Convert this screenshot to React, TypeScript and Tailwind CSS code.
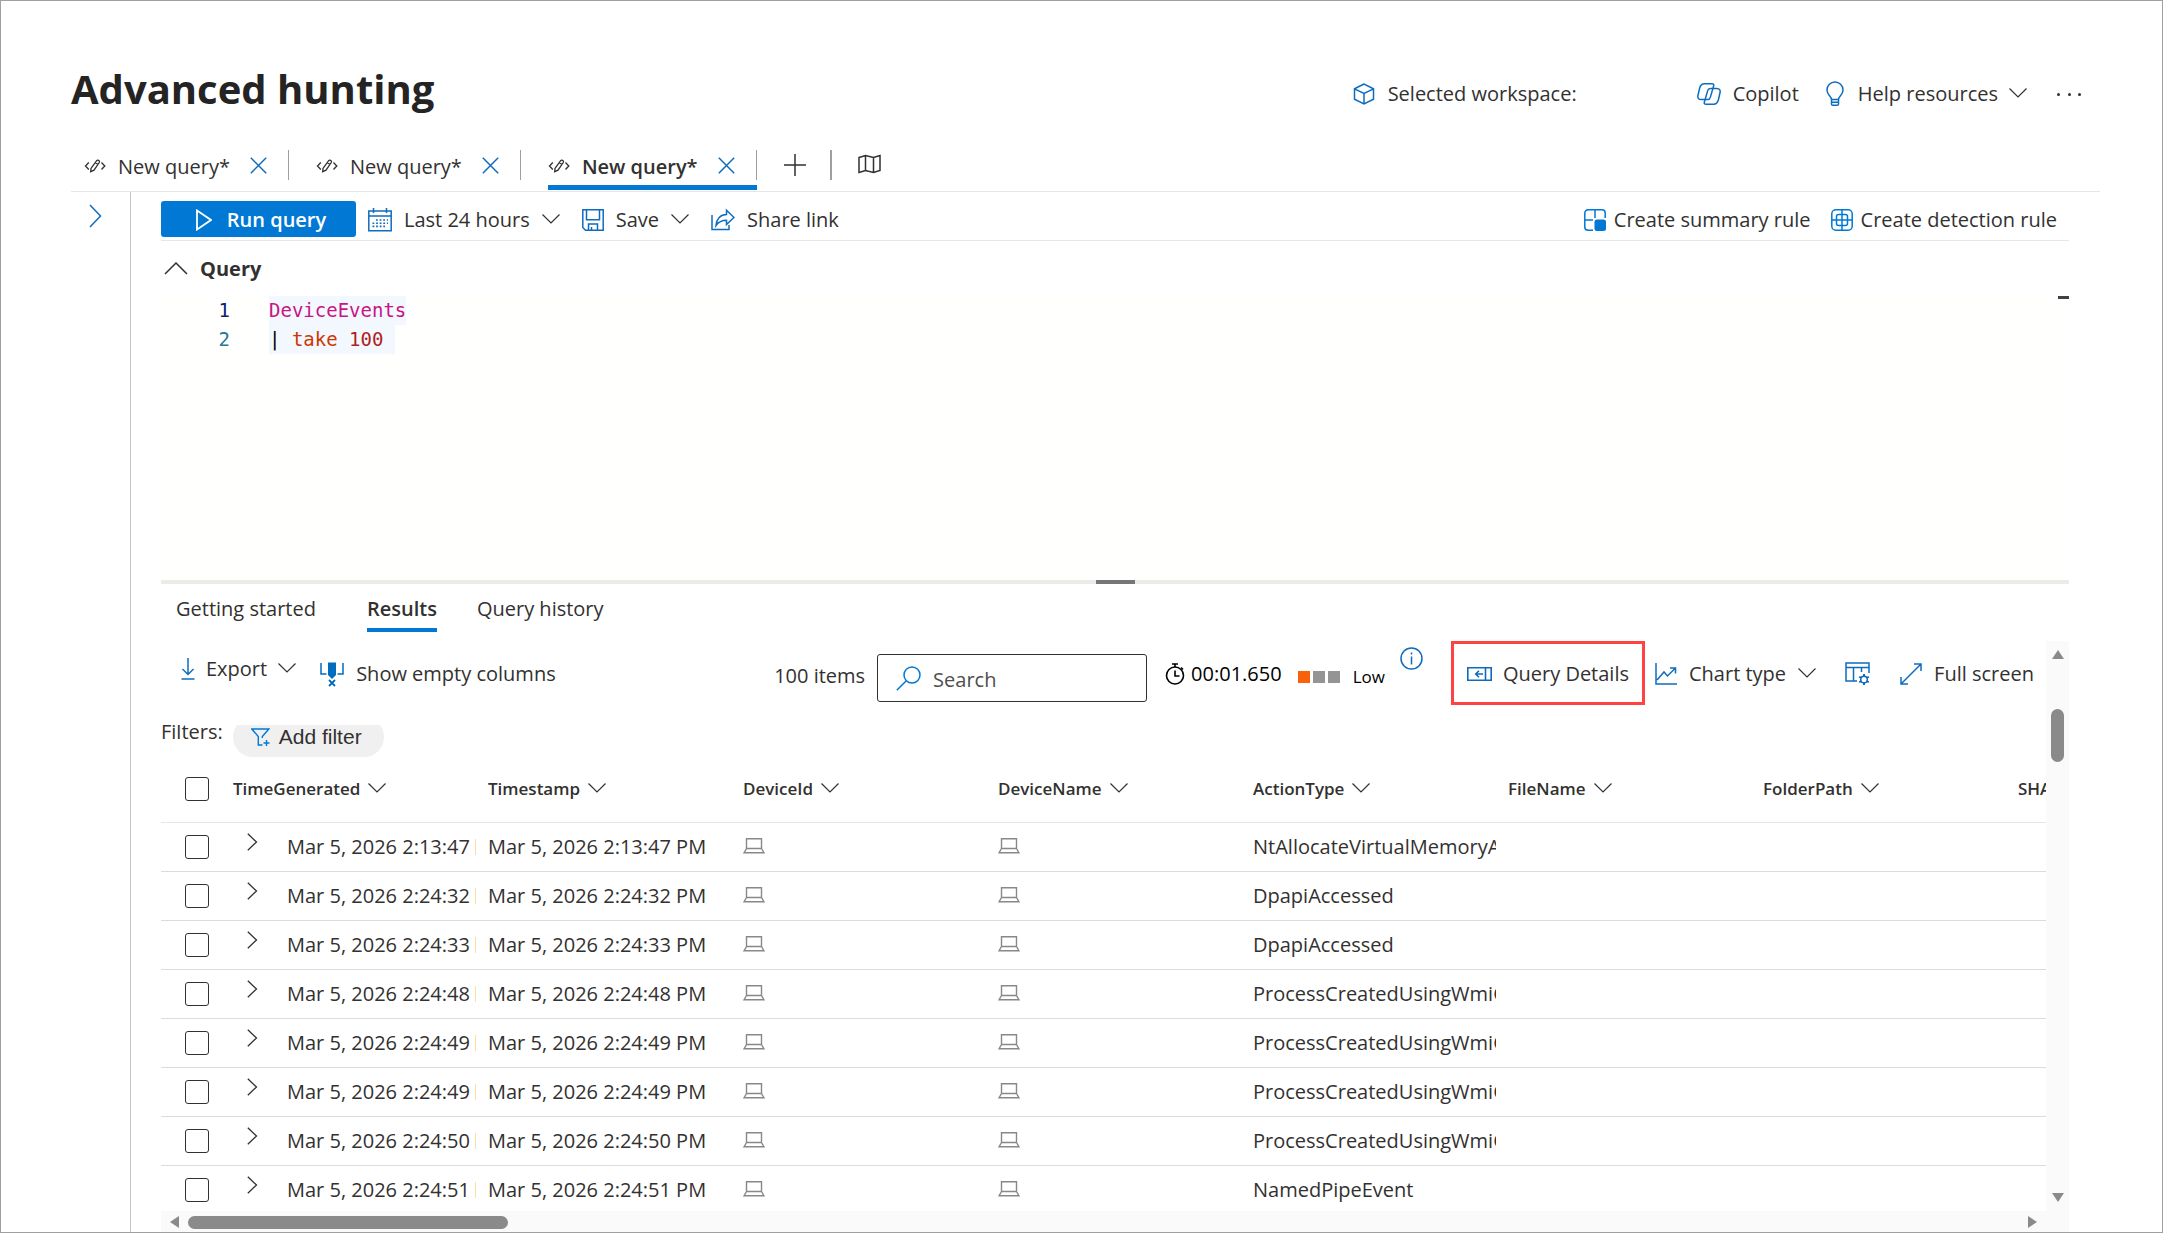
import React, { useState } from 'react';

interface EventRow {
  id: number;
  time: string;
  action: string;
}

const ROWS: EventRow[] = [
  { id: 1, time: 'Mar 5, 2026 2:13:47 PM', action: 'NtAllocateVirtualMemoryApiCall' },
  { id: 2, time: 'Mar 5, 2026 2:24:32 PM', action: 'DpapiAccessed' },
  { id: 3, time: 'Mar 5, 2026 2:24:33 PM', action: 'DpapiAccessed' },
  { id: 4, time: 'Mar 5, 2026 2:24:48 PM', action: 'ProcessCreatedUsingWmiQuery' },
  { id: 5, time: 'Mar 5, 2026 2:24:49 PM', action: 'ProcessCreatedUsingWmiQuery' },
  { id: 6, time: 'Mar 5, 2026 2:24:49 PM', action: 'ProcessCreatedUsingWmiQuery' },
  { id: 7, time: 'Mar 5, 2026 2:24:50 PM', action: 'ProcessCreatedUsingWmiQuery' },
  { id: 8, time: 'Mar 5, 2026 2:24:51 PM', action: 'NamedPipeEvent' },
];

const COLUMNS = [
  'TimeGenerated',
  'Timestamp',
  'DeviceId',
  'DeviceName',
  'ActionType',
  'FileName',
  'FolderPath',
  'SHA1',
];

const QUERY_TABS = [1, 2, 3];

interface IconProps {
  w: number;
  h: number;
  className?: string;
  sw?: number;
  children: React.ReactNode;
}

function Icon({ w, h, className = 'text-[#0f6cbd]', sw = 1.5, children }: IconProps) {
  return (
    <svg
      width={w}
      height={h}
      viewBox={`0 0 ${w} ${h}`}
      fill="none"
      stroke="currentColor"
      strokeWidth={sw}
      className={`shrink-0 ${className}`}
      aria-hidden="true"
    >
      {children}
    </svg>
  );
}

const ChevronDown = () => (
  <Icon w={18} h={18} sw={1.2} className="text-[#323130]">
    <path d="M.5 3.500 9 12 17.500 3.500" />
  </Icon>
);

const CodeIcon = () => (
  <Icon w={22} h={18} sw={1.3} className="text-[#323130]">
    <path d="M4.800 4.500 1.500 8l3.300 3.500M17.500 4.500 20.800 8l-3.300 3.500" />
    <path d="M12.500 2.800c1.200-1.500 3.600-.3 2.900 1.500L10 12.200l-3.300 1.500.3-3.300zM11.300 4.700l2.700 1.600" />
  </Icon>
);

const CloseIcon = () => (
  <Icon w={17} h={17} sw={1.5}>
    <path d="m.8.8 15.400 15.400M16.200.8.8 16.200" />
  </Icon>
);

const CubeIcon = () => (
  <Icon w={22} h={24}>
    <path d="M11 2 1.500 6.800v10.400L11 22l9.500-4.800V6.800zM1.500 6.800 11 11.500l9.500-4.700M11 11.500V22" />
  </Icon>
);

const CopilotIcon = () => (
  <Icon w={24} h={22}>
    <path d="M7.500.8h7.700c1.200 0 1.800.9 1.500 2l-3.400 11.600c-.4 1.400-1.200 2.200-2.600 2.200H4c-2.500 0-3.600-1.800-3-4.300l1.600-7C3.400 2.200 5 .8 7.500.8z" />
    <path d="M16.500 21.200H8.800c-1.200 0-1.800-.9-1.500-2l3.400-11.600c.4-1.400 1.200-2.200 2.600-2.200H20c2.500 0 3.600 1.800 3 4.300l-1.600 7c-.8 3.100-2.400 4.500-4.900 4.500z" />
  </Icon>
);

const BulbIcon = () => (
  <Icon w={24} h={26}>
    <path d="M8.500 18.500c0-3.500-4.500-4.500-4.500-9.500a8 8 0 0 1 16 0c0 5-4.500 6-4.500 9.500zM8.500 18.500V23c0 .8.500 1.300 1.300 1.300h4.400c.8 0 1.300-.5 1.300-1.300v-4.500M8.500 21.300h7" />
  </Icon>
);

const MapIcon = () => (
  <Icon w={23} h={20} className="text-[#323130]">
    <path d="M1 3.500 7.500 1.500l8 2 6.500-2v15l-6.500 2-8-2-6.500 2zM7.500 1.500v15M15.500 3.500v15" />
  </Icon>
);

const CalendarIcon = () => (
  <Icon w={24} h={24}>
    <path d="M.8 3h22.400v19.700H.8zM.8 8h22.400M5.500 0v5M18.500 0v5" />
    <path d="M8 12h12M4.500 15.200H20M4.500 18.400H17" strokeWidth={1.600} strokeDasharray="1.8 1.8" />
  </Icon>
);

const SaveIcon = () => (
  <Icon w={22} h={22}>
    <path d="M.8.8h20.400v20.400H3.500L.8 18.500zM4.500.8v10h13v-10M6.500 21V15h9v6M9.500 18v3" />
  </Icon>
);

const ShareIcon = () => (
  <Icon w={24} h={24}>
    <path d="M1 7v14.500h17V17" />
    <path d="M5 17.500C5.500 11 9.500 6.500 15.500 6.500V2.200L23 9.500l-7.500 7v-4.200C10.500 12.300 7.500 14 5 17.500z" />
  </Icon>
);

const SummaryRuleIcon = () => (
  <Icon w={22} h={22} className="text-[#0078d4]">
    <path d="M9 21.200H4A3.200 3.200 0 0 1 .8 18V4A3.200 3.200 0 0 1 4 .8h14A3.200 3.200 0 0 1 21.200 4v5M.8 11H9M11 .8V9" />
    <rect x="10.500" y="10.500" width="11.500" height="11.500" rx="2.500" fill="currentColor" stroke="none" />
  </Icon>
);

const DetectionRuleIcon = () => (
  <Icon w={22} h={22} className="text-[#0078d4]">
    <rect x=".8" y=".8" width="20.400" height="20.400" rx="4" />
    <rect x="5.500" y="5.500" width="11" height="11" rx="2" />
    <path d="M11 1v20M1 11h20" />
  </Icon>
);

const ExportIcon = () => (
  <Icon w={14} h={22}>
    <path d="M7 0v16.500M1.500 11 7 16.500 12.500 11M.5 21h13" />
  </Icon>
);

const ColumnsIcon = () => (
  <Icon w={24} h={25} className="text-[#006cbe]">
    <path d="M1 1v11h5.500M23 1v11h-5.500" />
    <path d="M8 .5h8V13l-4 4-4-4z" fill="currentColor" stroke="none" />
    <path d="m9 18 6 6M15 18l-6 6" strokeWidth={1.800} />
  </Icon>
);

const SearchIcon = () => (
  <Icon w={25} h={25} className="text-[#0078d4]">
    <circle cx="16" cy="9" r="8" />
    <path d="M10.300 14.700.8 24.200" />
  </Icon>
);

const StopwatchIcon = () => (
  <Icon w={20} h={22} className="text-black" sw={1.600}>
    <circle cx="10" cy="12.500" r="8.500" />
    <path d="M7 1h6M10 1v3M16 4.500l2 2M10 7.500v5.500h4.500" />
  </Icon>
);

const InfoIcon = () => (
  <Icon w={23} h={23}>
    <circle cx="11.500" cy="11.500" r="10.500" />
    <path d="M11.500 9.500v8M11.500 5.500v2" />
  </Icon>
);

const PaneIcon = () => (
  <Icon w={25} h={14} sw={1.600}>
    <path d="M.8.800h23.400v12.400H.8zM18.500 1v12M16 7H8.500M12 3.700 8.700 7l3.300 3.300" />
  </Icon>
);

const ChartIcon = () => (
  <Icon w={22} h={22}>
    <path d="M1 0v21h21M2 17l7-8 3.500 4 8-8M15 5h5.500v5.500" />
  </Icon>
);

const TableSettingsIcon = () => (
  <Icon w={25} h={24}>
    <path d="M12 19H1V1h23v10M1 5.500h23M8.500 5.500V19M16.500 5.500V10" />
    <circle cx="19" cy="17.500" r="3.300" />
    <path d="M19 12v2.500M19 20.500V23M14.200 14.700l2.200 1.300M21.600 19l2.200 1.300M14.200 20.300l2.200-1.300M21.600 16l2.200-1.300" strokeWidth={1.900} />
  </Icon>
);

const ExpandIcon = () => (
  <Icon w={22} h={22}>
    <path d="M1 21 21 1M14 1h7v7M1 14v7h7" />
  </Icon>
);

const FunnelIcon = () => (
  <Icon w={19} h={18} className="text-[#0078d4]" sw={1.400}>
    <path d="M11.300 10V8.500L17.800 1H.8l6.500 7.500V17h4.200" />
    <path d="M15.500 12v6M12.500 15h6" />
  </Icon>
);

const LaptopIcon = () => (
  <Icon w={22} h={16} className="text-[#8a8886]" sw={1.400}>
    <path d="M3.500.8h15v9.700h-15zM3.500 10.500 1 14.800h20l-2.500-4.300" />
  </Icon>
);

function Checkbox({ label }: { label: string }) {
  return (
    <input
      type="checkbox"
      aria-label={label}
      className="block size-6 appearance-none rounded-[3px] border border-[#323130] bg-white checked:bg-[#0078d4]"
    />
  );
}

function PageHeader() {
  return (
    <header className="flex items-center justify-between pt-14 pr-[19px]">
      <h1 className="text-[40px] leading-[64px] font-bold text-[#242424]">Advanced hunting</h1>
      <div className="flex items-center pt-[10px]">
        <div className="mr-[120px] flex items-center gap-[13px]">
          <CubeIcon />
          <span>Selected workspace:</span>
        </div>
        <button type="button" className="mr-6 flex items-center gap-3">
          <CopilotIcon />
          Copilot
        </button>
        <button type="button" className="mr-[30px] flex items-center gap-[11px]">
          <BulbIcon />
          Help resources
          <ChevronDown />
        </button>
        <button type="button" aria-label="More" className="flex w-6 justify-between">
          <span className="size-[3px] rounded-full bg-[#323130]" />
          <span className="size-[3px] rounded-full bg-[#323130]" />
          <span className="size-[3px] rounded-full bg-[#323130]" />
        </button>
      </div>
    </header>
  );
}

function QueryTabs() {
  const [active, setActive] = useState(3);

  return (
    <nav className="mt-5 flex h-[51px] shrink-0 items-start border-b border-[#e6e6e6] pl-[13px]">
      {QUERY_TABS.map((id) => (
        <div
          key={id}
          className={`mr-[27px] flex h-[49px] items-start ${
            id === active ? 'border-b-[5px] border-[#0078d4]' : ''
          }`}
        >
          <div className="mt-[9px] flex h-[30px] items-center border-r border-[#a19f9d] pr-[21px]">
            <button
              type="button"
              onClick={() => setActive(id)}
              className={`flex items-center gap-3 pt-[3px] ${id === active ? 'font-semibold' : ''}`}
            >
              <CodeIcon />
              New query*
            </button>
            <button type="button" aria-label="Close tab" className="ml-5 pt-px">
              <CloseIcon />
            </button>
          </div>
        </div>
      ))}
      <div className="mt-[9px] flex h-[30px] items-center border-r-2 border-[#a19f9d] pr-6">
        <button type="button" aria-label="New tab">
          <Icon w={22} h={22} className="text-[#323130]">
            <path d="M11 0v22M0 11h22" />
          </Icon>
        </button>
      </div>
      <button type="button" aria-label="Schema reference" className="mt-[13px] ml-[26px]">
        <MapIcon />
      </button>
    </nav>
  );
}

function Toolbar() {
  return (
    <div className="flex h-[49px] items-center justify-between border-b border-[#e6e6e6] pt-[6px]">
      <div className="flex items-center">
        <button
          type="button"
          className="flex h-9 w-[195px] items-center justify-center gap-[15px] rounded-[3px] bg-[#0078d4] pt-[2px] pl-[5px] font-semibold text-white"
        >
          <Icon w={16} h={22} sw={1.800} className="text-white">
            <path d="M1 1.500 15 11 1 20.500z" />
          </Icon>
          Run query
        </button>
        <button type="button" className="ml-3 flex items-center gap-3 pt-[2px]">
          <CalendarIcon />
          Last 24 hours
          <ChevronDown />
        </button>
        <button type="button" className="ml-[22px] flex items-center gap-3 pt-[2px]">
          <SaveIcon />
          Save
          <ChevronDown />
        </button>
        <button type="button" className="ml-[22px] flex items-center gap-3 pt-[2px]">
          <ShareIcon />
          Share link
        </button>
      </div>
      <div className="flex items-center gap-5 pt-[2px] pr-3">
        <button type="button" className="flex items-center gap-2">
          <SummaryRuleIcon />
          Create summary rule
        </button>
        <button type="button" className="flex items-center gap-2">
          <DetectionRuleIcon />
          Create detection rule
        </button>
      </div>
    </div>
  );
}

function QueryEditor() {
  return (
    <section>
      <h2>
        <button type="button" className="flex h-[55px] items-center gap-3 pl-[3px] font-bold">
          <Icon w={24} h={14} className="text-[#323130]">
            <path d="M1 12 12 1l11 11" />
          </Icon>
          Query
        </button>
      </h2>
      <div className="flex h-[284px] justify-between bg-[#fffffe] font-['DejaVu_Sans_Mono',monospace] text-[19px] leading-[29px]">
        <div className="flex">
          <div className="w-[69px] text-right">
            <div className="text-[#0b216f]">1</div>
            <div className="text-[#237893]">2</div>
          </div>
          <pre className="ml-[39px] font-['DejaVu_Sans_Mono',monospace]">
            <div>
              <span className="inline-block bg-[#f3f8ff] text-[#c71585]">DeviceEvents</span>
            </div>
            <div>
              <span className="inline-block bg-[#f3f8ff] text-black">
                | <span className="text-[#cc3700]">take</span> <span className="text-[#b01f24]">100</span>{' '}
              </span>
            </div>
          </pre>
        </div>
        <div className="h-[3px] w-[11px] bg-[#424242]" />
      </div>
      <div className="flex h-1 justify-center bg-[#ebebea]">
        <div className="w-[39px] bg-[#767676]" />
      </div>
    </section>
  );
}

function ResultTabs() {
  return (
    <nav className="flex h-[57px] items-start pl-[15px]">
      <button type="button" className="h-12 pt-[2px]">Getting started</button>
      <button type="button" className="ml-[51px] h-12 border-b-4 border-[#0078d4] pt-[6px] font-semibold">
        Results
      </button>
      <button type="button" className="ml-10 h-12 pt-[2px]">Query history</button>
    </nav>
  );
}

function ResultsToolbar() {
  return (
    <div className="flex h-[66px] items-center justify-between pr-3 pl-5">
      <div className="flex items-center gap-6">
        <button type="button" className="mb-[10px] flex items-center gap-[11px]">
          <ExportIcon />
          Export
          <ChevronDown />
        </button>
        <button type="button" className="flex items-center gap-3">
          <ColumnsIcon />
          Show empty columns
        </button>
      </div>
      <div className="flex h-full items-center">
        <span className="pt-1">100 items</span>
        <label className="mt-2 ml-3 flex h-12 w-[270px] items-center gap-3 rounded-[3px] border border-[#323130] px-[18px]">
          <SearchIcon />
          <input
            type="search"
            aria-label="Search"
            placeholder="Search"
            className="w-full pt-1 outline-none placeholder:text-[#4f4e4d]"
          />
        </label>
        <div className="ml-[18px] flex items-center gap-[6px] text-black">
          <StopwatchIcon />
          00:01.650
        </div>
        <div className="ml-4 flex items-center gap-[3px] pt-[6px] text-[17px] text-black">
          <span className="size-3 bg-[#f7630c]" />
          <span className="size-3 bg-[#949494]" />
          <span className="size-3 bg-[#949494]" />
          <span className="ml-[10px]">Low</span>
        </div>
        <button type="button" aria-label="Resource usage info" className="mt-[6px] ml-[15px] self-start">
          <InfoIcon />
        </button>
        <button
          type="button"
          className="ml-7 flex h-16 items-center gap-[11px] self-start border-[3px] border-[#ff4343] px-[13px] pt-[2px]"
        >
          <PaneIcon />
          Query Details
        </button>
        <button type="button" className="ml-[10px] flex items-center gap-3">
          <ChartIcon />
          Chart type
          <ChevronDown />
        </button>
        <button type="button" aria-label="Customize columns" className="ml-[29px]">
          <TableSettingsIcon />
        </button>
        <button type="button" className="ml-[30px] flex items-center gap-3">
          <ExpandIcon />
          Full screen
        </button>
      </div>
    </div>
  );
}

function FilterBar() {
  return (
    <div className="mt-[18px] flex h-8 items-end gap-[10px] overflow-hidden">
      <span className="pb-[11px]">Filters:</span>
      <button
        type="button"
        className="flex h-10 shrink-0 items-center gap-[9px] rounded-full bg-[#f0f0f0] pr-[22px] pl-[18px] font-['Liberation_Sans',sans-serif] text-[21px]"
      >
        <FunnelIcon />
        Add filter
      </button>
    </div>
  );
}

function ResultsTable() {
  return (
    <table className="w-[2112px] table-fixed border-collapse text-left">
      <thead>
        <tr className="h-[65px] border-b border-[#e6e6e6]">
          <th className="w-[72px] pl-6">
            <Checkbox label="Select all rows" />
          </th>
          {COLUMNS.map((col) => (
            <th key={col} className="w-[255px] text-[17px] font-semibold">
              <button type="button" className="flex items-center gap-2">
                {col}
                <ChevronDown />
              </button>
            </th>
          ))}
        </tr>
      </thead>
      <tbody>
        {ROWS.map((row) => (
          <tr key={row.id} className="h-[49px] border-b border-[#dcdcdc]">
            <td className="pl-6">
              <Checkbox label={`Select row ${row.id}`} />
            </td>
            <td className="pr-3 pl-[14px]">
              <div className="flex items-center">
                <button type="button" aria-label="Expand row" className="mb-[10px] w-10 shrink-0">
                  <Icon w={11} h={18} sw={1.300} className="text-[#323130]">
                    <path d="M.800.800 9.500 9 .800 17.200" />
                  </Icon>
                </button>
                <span className="w-[186px] overflow-hidden whitespace-nowrap">{row.time}</span>
                <span className="ml-[2px] h-4 w-px bg-[#fbe0a0]" />
              </div>
            </td>
            <td className="whitespace-nowrap">{row.time}</td>
            <td className="pb-[2px]">
              <LaptopIcon />
            </td>
            <td className="pb-[2px]">
              <LaptopIcon />
            </td>
            <td className="pr-3">
              <div className="overflow-hidden">{row.action}</div>
            </td>
            <td />
            <td />
            <td />
          </tr>
        ))}
      </tbody>
    </table>
  );
}

function ResultsPanel() {
  return (
    <section className="flex min-h-0 flex-1 flex-col">
      <div className="flex min-h-0 flex-1">
        <div className="min-w-0 flex-1 overflow-hidden">
          <ResultsToolbar />
          <FilterBar />
          <ResultsTable />
        </div>
        {/* Vertical scrollbar */}
        <div className="flex w-[23px] flex-col items-center bg-[#fafafa] py-[9px]">
          <svg width="12" height="9" className="shrink-0 text-[#8a8a8a]">
            <path d="M6 0 12 9H0z" fill="currentColor" />
          </svg>
          <div className="mt-[50px] h-[53px] w-[13px] shrink-0 rounded-full bg-[#8a8a8a]" />
          <svg width="12" height="9" className="mt-auto shrink-0 text-[#8a8a8a]">
            <path d="M0 0h12L6 9z" fill="currentColor" />
          </svg>
        </div>
      </div>
      {/* Horizontal scrollbar */}
      <div className="flex h-[21px] shrink-0 items-center bg-[#fafafa] pt-px pr-8 pl-[9px]">
        <svg width="9" height="12" className="text-[#8a8a8a]">
          <path d="M9 0v12L0 6z" fill="currentColor" />
        </svg>
        <div className="ml-[9px] h-[13px] w-[320px] rounded-full bg-[#8a8a8a]" />
        <svg width="9" height="12" className="ml-auto text-[#8a8a8a]">
          <path d="M0 0v12l9-6z" fill="currentColor" />
        </svg>
      </div>
    </section>
  );
}

export default function App() {
  return (
    <div className="flex h-screen flex-col overflow-hidden border border-[#a0a0a0] bg-white pr-[62px] pl-[70px] font-['Open_Sans','Segoe_UI',sans-serif] text-xl text-[#323130]">
      <PageHeader />
      <QueryTabs />
      <div className="flex min-h-0 flex-1">
        <aside className="w-[60px] shrink-0 border-r border-[#c8c6c4]">
          <button type="button" aria-label="Expand schema pane" className="mt-3 ml-[18px]">
            <Icon w={13} h={24}>
              <path d="m1 1 10.500 11L1 23" />
            </Icon>
          </button>
        </aside>
        <main className="mr-[31px] ml-[30px] flex min-w-0 flex-1 flex-col">
          <Toolbar />
          <QueryEditor />
          <ResultTabs />
          <ResultsPanel />
        </main>
      </div>
    </div>
  );
}
